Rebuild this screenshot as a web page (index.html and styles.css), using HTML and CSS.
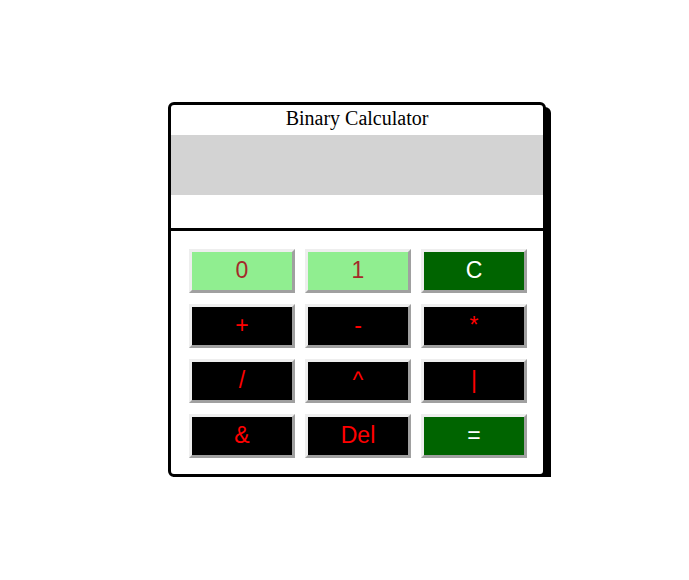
FILE: index.html
```html
<!DOCTYPE html>
<html>
<head>
<meta charset="utf-8">
<link rel="stylesheet" href="styles.css">
</head>
<body>
<div class="page">
  <div class="calc">
    <div class="title">Binary Calculator</div>
    <div class="display"></div>
    <div class="result"></div>
    <div class="keys">
      <div class="btn digit">0</div>
      <div class="btn digit">1</div>
      <div class="btn action">C</div>
      <div class="btn op">+</div>
      <div class="btn op">-</div>
      <div class="btn op">*</div>
      <div class="btn op">/</div>
      <div class="btn op">^</div>
      <div class="btn op">|</div>
      <div class="btn op">&amp;</div>
      <div class="btn op">Del</div>
      <div class="btn action">=</div>
    </div>
  </div>
</div>
</body>
</html>
```

FILE: styles.css
```css
html, body {
  margin: 0;
  padding: 0;
  background: #ffffff;
}

.page {
  padding: 102px 0 0 168px;
}

.calc {
  width: 372px;
  border: 3px solid #000000;
  border-radius: 6px;
  box-shadow: 5px 5px 0 #000000;
  background: #ffffff;
  display: flex;
  flex-direction: column;
}

.title {
  font-family: "Liberation Serif", "Times New Roman", serif;
  font-size: 20px;
  line-height: 23px;
  height: 23px;
  padding: 2px 0 5px;
  text-align: center;
  color: #000000;
}

.display {
  height: 60px;
  background: #d3d3d3;
}

.result {
  height: 33px;
  border-bottom: 3px solid #000000;
}

.keys {
  display: grid;
  grid-template-columns: repeat(3, 106px);
  grid-auto-rows: 44px;
  column-gap: 10px;
  row-gap: 11px;
  padding: 18px 16px 16px 18px;
}

.btn {
  box-sizing: border-box;
  border: 3px solid;
  border-color: #eeeeee #a0a0a0 #a0a0a0 #eeeeee;
  display: flex;
  align-items: center;
  justify-content: center;
  font-family: "Liberation Sans", Arial, sans-serif;
  font-size: 23px;
  padding-bottom: 2px;
}

.digit {
  background: #90ee90;
  color: #a52a2a;
}

.action {
  background: #006400;
  color: #ffffff;
}

.op {
  background: #000000;
  color: #ff0000;
}
```
